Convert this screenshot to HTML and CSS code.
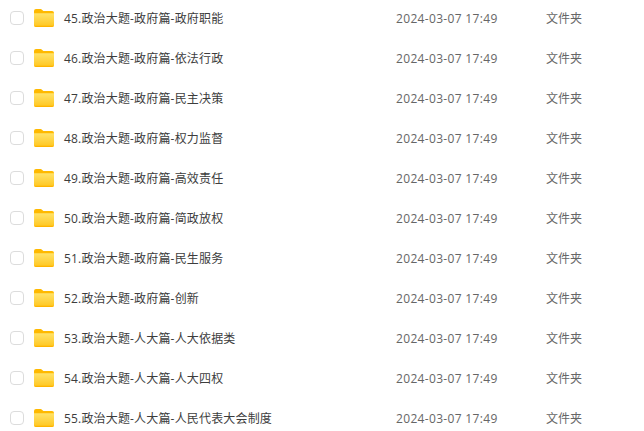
FILE: index.html
```html
<!DOCTYPE html>
<html lang="zh-CN">
<head>
    <meta charset="UTF-8">
    <meta name="viewport" content="width=device-width, initial-scale=1.0">
    <title>文件列表</title>
    <link rel="stylesheet" href="styles.css">
</head>
<body>
    <svg class="defs" width="0" height="0" aria-hidden="true">
        <defs>
            <linearGradient id="folder-front" x1="0" y1="0" x2="0" y2="1">
                <stop offset="0" stop-color="#ffe36b"/>
                <stop offset="1" stop-color="#ffc61e"/>
            </linearGradient>
            <symbol id="folder" viewBox="0 0 20 18">
                <path d="M0 2a2 2 0 0 1 2-2h5l2.4 2H18a2 2 0 0 1 2 2v2H0z" fill="#ffb900"/>
                <path d="M0 4.200h20V16a2 2 0 0 1-2 2H2a2 2 0 0 1-2-2z" fill="url(#folder-front)"/>
                <path d="M0 16a2 2 0 0 0 2 2h16a2 2 0 0 0 2-2v-.8a1.500 1.500 0 0 1-1.500 1.500h-17A1.500 1.500 0 0 1 0 15.200z" fill="#ffb400"/>
            </symbol>
        </defs>
    </svg>

    <ul class="file-list">
        <li class="file-row">
            <span class="check"></span>
            <svg class="folder"><use href="#folder"/></svg>
            <span class="name">45.政治大题-政府篇-政府职能</span>
            <span class="date">2024-03-07 17:49</span>
            <span class="type">文件夹</span>
        </li>
        <li class="file-row">
            <span class="check"></span>
            <svg class="folder"><use href="#folder"/></svg>
            <span class="name">46.政治大题-政府篇-依法行政</span>
            <span class="date">2024-03-07 17:49</span>
            <span class="type">文件夹</span>
        </li>
        <li class="file-row">
            <span class="check"></span>
            <svg class="folder"><use href="#folder"/></svg>
            <span class="name">47.政治大题-政府篇-民主决策</span>
            <span class="date">2024-03-07 17:49</span>
            <span class="type">文件夹</span>
        </li>
        <li class="file-row">
            <span class="check"></span>
            <svg class="folder"><use href="#folder"/></svg>
            <span class="name">48.政治大题-政府篇-权力监督</span>
            <span class="date">2024-03-07 17:49</span>
            <span class="type">文件夹</span>
        </li>
        <li class="file-row">
            <span class="check"></span>
            <svg class="folder"><use href="#folder"/></svg>
            <span class="name">49.政治大题-政府篇-高效责任</span>
            <span class="date">2024-03-07 17:49</span>
            <span class="type">文件夹</span>
        </li>
        <li class="file-row">
            <span class="check"></span>
            <svg class="folder"><use href="#folder"/></svg>
            <span class="name">50.政治大题-政府篇-简政放权</span>
            <span class="date">2024-03-07 17:49</span>
            <span class="type">文件夹</span>
        </li>
        <li class="file-row">
            <span class="check"></span>
            <svg class="folder"><use href="#folder"/></svg>
            <span class="name">51.政治大题-政府篇-民生服务</span>
            <span class="date">2024-03-07 17:49</span>
            <span class="type">文件夹</span>
        </li>
        <li class="file-row">
            <span class="check"></span>
            <svg class="folder"><use href="#folder"/></svg>
            <span class="name">52.政治大题-政府篇-创新</span>
            <span class="date">2024-03-07 17:49</span>
            <span class="type">文件夹</span>
        </li>
        <li class="file-row">
            <span class="check"></span>
            <svg class="folder"><use href="#folder"/></svg>
            <span class="name">53.政治大题-人大篇-人大依据类</span>
            <span class="date">2024-03-07 17:49</span>
            <span class="type">文件夹</span>
        </li>
        <li class="file-row">
            <span class="check"></span>
            <svg class="folder"><use href="#folder"/></svg>
            <span class="name">54.政治大题-人大篇-人大四权</span>
            <span class="date">2024-03-07 17:49</span>
            <span class="type">文件夹</span>
        </li>
        <li class="file-row">
            <span class="check"></span>
            <svg class="folder"><use href="#folder"/></svg>
            <span class="name">55.政治大题-人大篇-人民代表大会制度</span>
            <span class="date">2024-03-07 17:49</span>
            <span class="type">文件夹</span>
        </li>
    </ul>
</body>
</html>
```

FILE: styles.css
```css
html, body {
    height: 100%;
    overflow: hidden;
}
body {
    font-family: "Open Sans", "Noto Sans CJK SC", sans-serif;
    font-size: 12px;
    margin: 0;
    padding: 0;
    background-color: #fff;
    color: #424e67;
}
.defs {
    display: block;
    height: 0;
}
.file-list {
    list-style: none;
    margin: -2px 0 0;
    padding: 0 0 0 10px;
}
.file-row {
    display: flex;
    align-items: center;
    height: 40px;
}
.check {
    box-sizing: border-box;
    width: 14px;
    height: 14px;
    border: 1px solid #dcdcdc;
    border-radius: 4px;
    background: #fff;
}
.folder {
    width: 20px;
    height: 18px;
    margin-left: 10px;
}
.name {
    width: 332px;
    margin-left: 10px;
    color: #3d3d3d;
    letter-spacing: .17px;
}
.date {
    width: 150px;
    color: #666;
    letter-spacing: .33px;
}
.type {
    color: #666;
}
```
